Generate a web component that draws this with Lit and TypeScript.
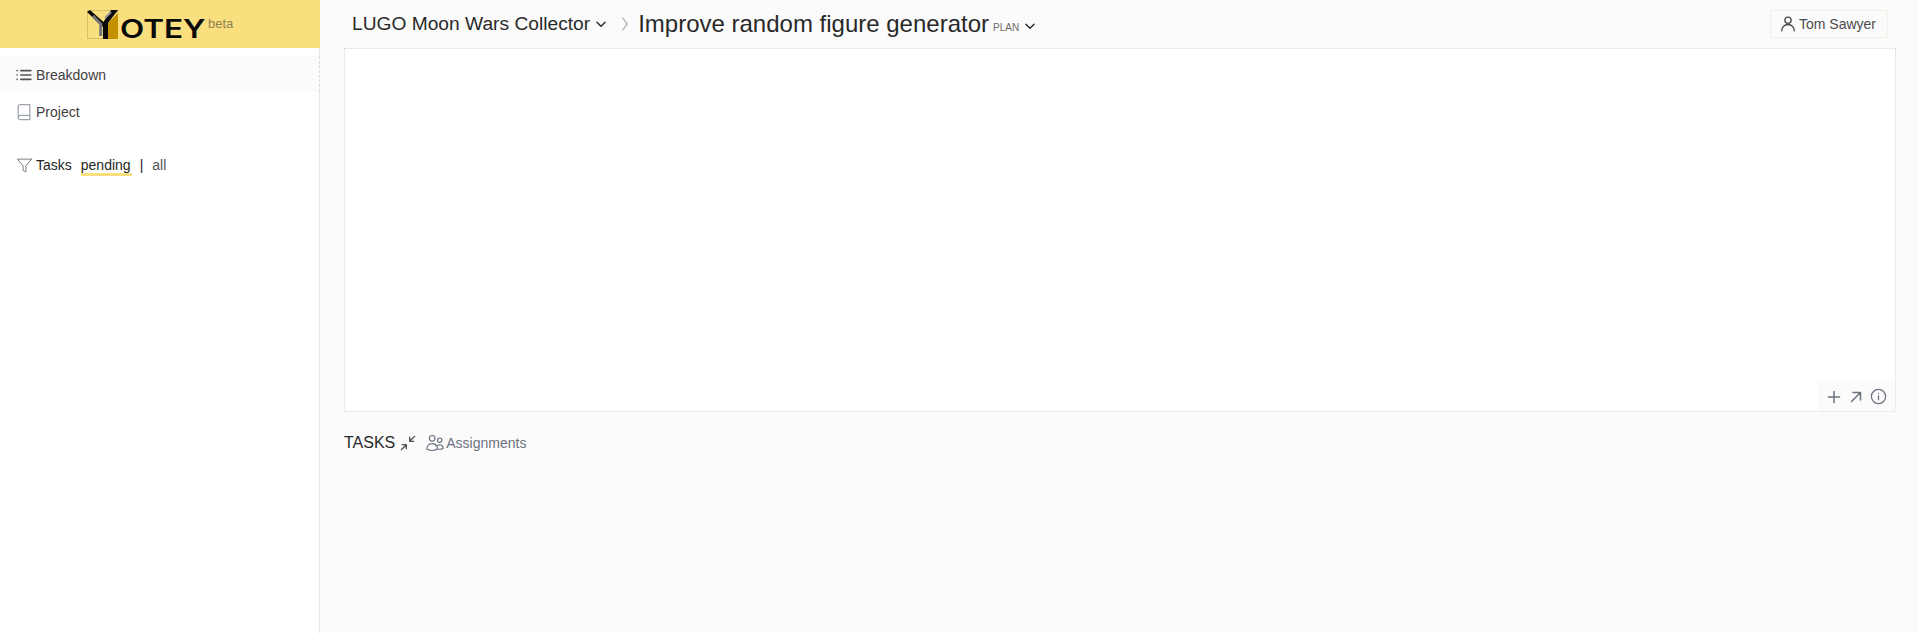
import { LitElement, html, css, svg } from "lit";
import { customElement } from "lit/decorators.js";

const icon = (size: number, body: unknown, sw = 1.5) => html`<svg class="ic" width=${size} height=${size} viewBox="0 0 24 24" fill="none" stroke="currentColor" stroke-width=${sw} stroke-linecap="round" stroke-linejoin="round">${body}</svg>`;

@customElement("app-root")
export class AppRoot extends LitElement {
  static styles = css`
    :host { display: block; font-family: "Liberation Sans", Arial, sans-serif; color: #404040; }
    .app { display: flex; height: 633px; overflow: hidden; background: #fbfbfb; }
    .ic { display: block; flex: none; }
    .side { width: 319px; flex: none; background: #fff; border-right: 1px solid #e5e5e5; display: flex; flex-direction: column; }
    .brand { height: 48px; background: #fadf7f; margin-right: -1px; display: flex; align-items: flex-start; padding-left: 87px; }
    .logo { display: flex; align-items: flex-start; margin-top: 9px; height: 30px; }
    .logo svg { display: block; }
    .word { font-family: Inter, sans-serif; font-weight: 600; font-size: 25px; line-height: 28px; color: #0a0a0a; margin-left: 1px; margin-top: 6px; transform: scaleX(1.26); transform-origin: left; width: 85px; }
    .beta { font-size: 13px; color: #8f8150; margin-left: 3px; margin-top: 7px; line-height: 15px; }
    .nav { display: flex; flex-direction: column; margin-top: 8px; }
    .row { height: 37px; box-sizing: border-box; display: flex; align-items: center; gap: 2px; padding: 2px 0 0 14px; font-size: 14px; color: #404040; }
    .row.on { height: 36px; background: #fbfbfb; margin-right: -1px; border-right: 1px dashed #d9d9d9; }
    .row.p { height: 38px; }
    .row .ic { color: #525252; }
    .row.p .ic { color: #9ca3af; }
    .filter { height: 24px; margin-top: 23px; display: flex; align-items: center; padding-left: 16px; font-size: 14px; color: #262626; }
    .filter .ic { color: #737373; margin-right: 3px; }
    .filter .pend { margin-left: 9px; border-bottom: 3px solid #fadf7f; line-height: 16px; height: 16px; margin-top: 3px; padding-right: 1px; }
    .filter .sep { margin: 0 9px 0 8px; }
    .filter .all { color: #525252; }
    .main { flex: 1; min-width: 0; display: flex; flex-direction: column; padding-left: 24px; padding-right: 23px; }
    .top { height: 48px; display: flex; align-items: center; flex: none; }
    .crumb { font-size: 19.2px; color: #292929; margin-left: 8px; }
    .chev { color: #292929; }
    .sepc { color: #9ca3af; margin: 0 4px 0 8px; }
    .title { font-size: 24px; color: #292929; margin-top: -1px; }
    .plan { font-size: 10px; color: #6b6b6b; margin-left: 4px; margin-top: 6px; }
    .user { margin-left: auto; margin-right: 8px; height: 28px; box-sizing: border-box; border: 1px solid #f3f0e6; display: flex; align-items: center; gap: 1px; padding: 0 11px 0 7px; font-size: 14px; color: #4b4b4b; background: #fbfbfb; }
    .chart { height: 364px; flex: none; box-sizing: border-box; background: #fff; border: 1px dotted #d6d6de; display: flex; justify-content: flex-end; align-items: flex-end; }
    .tools { height: 30px; width: 78px; background: #fbfbfb; display: flex; align-items: center; justify-content: flex-end; gap: 4px; padding: 1px 7px 0 0; box-sizing: border-box; color: #6b7280; }
    .tasks { display: flex; align-items: center; margin-top: 20px; height: 22px; }
    .tasks .t { font-size: 16px; color: #292929; }
    .tasks .c { color: #525252; margin: 0 2px 0 3px; }
    .tasks .a { display: flex; align-items: center; gap: 1px; font-size: 14px; color: #6b7280; margin-left: 5px; }
  `;

  render() {
    const chevron = svg`<path d="M19 9l-7 7-7-7" />`;
    return html`<div class="app">
      <aside class="side">
        <div class="brand">
          <div class="logo">
            <svg width="32" height="30" viewBox="0 0 32 30">
              <rect x="0.5" y="1.5" width="30" height="28" fill="none" stroke="#d8c06a" stroke-width="1"/>
              <polygon points="31,4 21,14 21,30 31,30" fill="#c49000"/>
              <polygon points="0,3 3,1 16.5,13 24,1 31,1 21,14 21,30 16,30 16,18" fill="#0a0a0a"/>
              <path d="M6 7L13.7 15V27" fill="none" stroke="#777" stroke-width="3"/>
              <path d="M18 9L24 3" fill="none" stroke="#999" stroke-width="2"/>
            </svg>
            <div class="word">OTEY</div>
            <div class="beta">beta</div>
          </div>
        </div>
        <nav class="nav">
          <div class="row on">${icon(20, svg`<path d="M8.25 6.75h12M8.25 12h12M8.25 17.25h12M3.75 6.75h.01M3.75 12h.01M3.75 17.25h.01"/>`, 2)}<span>Breakdown</span></div>
          <div class="row p">${icon(20, svg`<path d="M5 18.5A2.5 2.5 0 0 1 7.5 16H19M7.5 3H19v18H7.5A2.5 2.5 0 0 1 5 18.5v-13A2.5 2.5 0 0 1 7.5 3z"/>`)}<span>Project</span></div>
        </nav>
        <div class="filter">
          ${icon(17, svg`<path d="M22 3H2l8 9.46V19l4 2v-8.54L22 3z"/>`, 1.3)}
          <span>Tasks</span><span class="pend">pending</span><span class="sep">|</span><span class="all">all</span>
        </div>
      </aside>
      <main class="main">
        <header class="top">
          <span class="crumb">LUGO Moon Wars Collector</span>
          <span class="chev" style="margin-left:4px">${icon(14, chevron, 2.4)}</span>
          <span class="sepc">${icon(18, svg`<path d="M9 4l6 8-6 8"/>`, 1.5)}</span>
          <span class="title">Improve random figure generator</span>
          <span class="plan">PLAN</span>
          <span class="chev" style="margin-left:4px;margin-top:3px">${icon(14, chevron, 2.4)}</span>
          <div class="user">${icon(20, svg`<circle cx="12" cy="7.5" r="3.75"/><path d="M4.5 20.1a7.5 7.5 0 0 1 15 0"/>`, 1.6)}<span>Tom Sawyer</span></div>
        </header>
        <section class="chart">
          <div class="tools">
            ${icon(18, svg`<path d="M12 4.5v15M4.5 12h15"/>`, 2)}
            ${icon(18, svg`<path d="M6 18L18 6M8 6h10v10"/>`, 2)}
            ${icon(19, svg`<circle cx="12" cy="12" r="9"/><path d="M12 11v5M12 8h.01"/>`, 1.6)}
          </div>
        </section>
        <div class="tasks">
          <span class="t">TASKS</span>
          <span class="c">${icon(20, svg`<path d="M4 20l6-6M5 14h5v5M20 4l-6 6M19 10h-5V5"/>`, 1.6)}</span>
          <span class="a">${icon(20, svg`<path d="M15 19.128a9.38 9.38 0 0 0 2.625.372 9.337 9.337 0 0 0 4.121-.952 4.125 4.125 0 0 0-7.533-2.493M15 19.128v-.003c0-1.113-.285-2.16-.786-3.07M15 19.128v.106A12.318 12.318 0 0 1 8.624 21c-2.331 0-4.512-.645-6.374-1.766l-.001-.109a6.375 6.375 0 0 1 11.964-3.07M12 6.375a3.375 3.375 0 1 1-6.75 0 3.375 3.375 0 0 1 6.75 0Zm8.25 2.25a2.625 2.625 0 1 1-5.25 0 2.625 2.625 0 0 1 5.25 0Z"/>`, 1.4)}<span>Assignments</span></span>
        </div>
      </main>
    </div>`;
  }
}
